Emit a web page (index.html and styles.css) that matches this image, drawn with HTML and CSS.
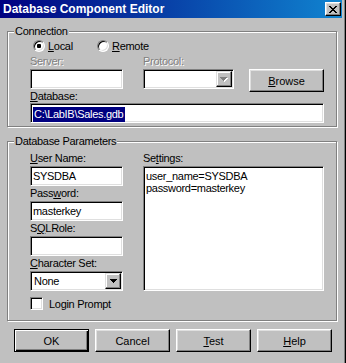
FILE: index.html
```html
<!DOCTYPE html>
<html lang="en">
<head>
    <meta charset="UTF-8">
    <title>Database Component Editor</title>
    <link rel="stylesheet" href="styles.css">
</head>
<body>
    <div class="window">
        <div class="titlebar">
            <span class="title">Database Component Editor</span>
            <button class="close">
                <svg width="8" height="7" viewBox="0 0 8 7" shape-rendering="crispEdges">
                    <path d="M0 0h2v1H0z M6 0h2v1H6z M1 1h2v1H1z M5 1h2v1H5z M2 2h4v1H2z M3 3h2v1H3z M2 4h4v1H2z M1 5h2v1H1z M5 5h2v1H5z M0 6h2v1H0z M6 6h2v1H6z" fill="#000"/>
                </svg>
            </button>
        </div>

        <div class="content">
            <fieldset class="group">
                <legend>Connection</legend>
                <div class="group-body conn">
                    <div class="radios">
                        <label class="radio"><span class="dot on"></span><span><u>L</u>ocal</span></label>
                        <label class="radio"><span class="dot"></span><span><u>R</u>emote</span></label>
                    </div>
                    <div class="server-row">
                        <div class="field server">
                            <div class="lbl disabled">Server:</div>
                            <div class="edit"></div>
                        </div>
                        <div class="field protocol">
                            <div class="lbl disabled">Protocol:</div>
                            <div class="combo">
                                <span class="combo-text"></span>
                                <span class="arrow">
                                    <svg width="8" height="5" viewBox="0 0 8 5" shape-rendering="crispEdges">
                                        <path d="M1 1h7v1H1z M2 2h5v1H2z M3 3h3v1H3z M4 4h1v1H4z" fill="#fff"/>
                                        <path d="M0 0h7v1H0z M1 1h5v1H1z M2 2h3v1H2z M3 3h1v1H3z" fill="#808080"/>
                                    </svg>
                                </span>
                            </div>
                        </div>
                        <button class="btn browse"><u>B</u>rowse</button>
                    </div>
                    <div class="field">
                        <div class="lbl short"><u>D</u>atabase:</div>
                        <div class="edit db"><span class="sel">C:\LabIB\Sales.gdb</span></div>
                    </div>
                </div>
            </fieldset>

            <fieldset class="group params">
                <legend>Database Parameters</legend>
                <div class="group-body">
                    <div class="param-grid">
                        <div class="left-col">
                            <div class="field">
                                <div class="lbl"><u>U</u>ser Name:</div>
                                <div class="edit">SYSDBA</div>
                            </div>
                            <div class="field">
                                <div class="lbl">Pass<u>w</u>ord:</div>
                                <div class="edit">masterkey</div>
                            </div>
                            <div class="field">
                                <div class="lbl">S<u>Q</u>LRole:</div>
                                <div class="edit"></div>
                            </div>
                            <div class="field">
                                <div class="lbl"><u>C</u>haracter Set:</div>
                                <div class="combo">
                                    <span class="combo-text">None</span>
                                    <span class="arrow">
                                        <svg width="7" height="4" viewBox="0 0 7 4" shape-rendering="crispEdges">
                                            <path d="M0 0h7v1H0z M1 1h5v1H1z M2 2h3v1H2z M3 3h1v1H3z" fill="#000"/>
                                        </svg>
                                    </span>
                                </div>
                            </div>
                        </div>
                        <div class="field">
                            <div class="lbl">Se<u>t</u>tings:</div>
                            <div class="memo">
                                <div>user_name=SYSDBA</div>
                                <div>password=masterkey</div>
                            </div>
                        </div>
                    </div>
                    <label class="check"><span class="box"></span><span>Login Prompt</span></label>
                </div>
            </fieldset>

            <div class="buttons">
                <button class="btn default">OK</button>
                <button class="btn">Cancel</button>
                <button class="btn"><u>T</u>est</button>
                <button class="btn"><u>H</u>elp</button>
            </div>
        </div>
    </div>
</body>
</html>
```

FILE: styles.css
```css
body {
    margin: 0;
    background-color: #c0c0c0;
    font-family: "Liberation Sans", Arial, sans-serif;
    font-size: 11px;
    letter-spacing: -0.3px;
    color: #000;
}
.window {
    width: 346px;
    height: 363px;
    box-sizing: border-box;
    padding-right: 3px;
    border-right: 1px solid #000;
    box-shadow: inset -1px 0 #808080;
}
.titlebar {
    height: 18px;
    display: flex;
    align-items: center;
    justify-content: space-between;
    padding: 0 1px 0 3px;
    background: linear-gradient(to right, #000080, #1084d0);
}
.title {
    color: white;
    font-weight: bold;
    font-size: 12px;
    letter-spacing: 0;
}
.close {
    width: 16px;
    height: 14px;
    padding: 0;
    display: flex;
    align-items: center;
    justify-content: center;
    background-color: #c0c0c0;
    border: 1px solid;
    border-color: #fff #000 #000 #fff;
    box-shadow: inset -1px -1px #808080, inset 1px 1px #dfdfdf;
}
.content {
    padding-left: 7px;
}

/* group boxes */
.group {
    width: 330px;
    box-sizing: border-box;
    margin: 7px 0 0;
    padding: 0 6px;
    min-width: 0;
    border: 1px solid #808080;
    box-shadow: inset 1px 1px #fff, 1px 1px #fff;
}
.group legend {
    padding: 0 1px;
    line-height: 13px;
    background-color: #c0c0c0;
}
.params {
    margin-top: 8px;
}
.group-body {
    padding: 3px 0 10px 16px;
}
.group-body.conn {
    padding: 0 0 3px 16px;
}

/* radios */
.radios {
    display: flex;
    align-items: center;
    height: 16px;
    padding-left: 3px;
}
.radio {
    display: flex;
    align-items: center;
    gap: 3px;
    width: 64px;
}
.dot {
    width: 12px;
    height: 12px;
    box-sizing: border-box;
    border-radius: 50%;
    background-color: #fff;
    border: 1px solid;
    border-color: #808080 #fff #fff #808080;
    box-shadow: inset 1px 1px #000, inset -1px -1px #dfdfdf;
}
.dot.on {
    background: radial-gradient(circle, #000 2px, #fff 2.5px);
}

/* fields */
.lbl {
    height: 15px;
    line-height: 15px;
    white-space: nowrap;
}
.lbl.short {
    height: 14px;
    line-height: 14px;
}
.lbl.disabled {
    color: #808080;
    text-shadow: 1px 1px #fff;
}
.edit, .combo, .memo, .box {
    box-sizing: border-box;
    background-color: #fff;
    border: 1px solid;
    border-color: #808080 #fff #fff #808080;
    box-shadow: inset 1px 1px #000, inset -1px -1px #dfdfdf;
}
.edit {
    height: 20px;
    line-height: 18px;
    padding: 0 2px;
    white-space: nowrap;
}
.edit.db {
    width: 294px;
}
.sel {
    display: inline-block;
    line-height: 15px;
    vertical-align: middle;
    padding: 0 2px 0 1px;
    background-color: #000080;
    color: white;
}
.combo {
    height: 20px;
    display: flex;
    align-items: center;
    justify-content: space-between;
    padding: 1px;
}
.combo-text {
    padding-left: 2px;
}
.arrow {
    width: 16px;
    height: 16px;
    box-sizing: border-box;
    display: flex;
    align-items: center;
    justify-content: center;
    background-color: #c0c0c0;
    border: 1px solid;
    border-color: #dfdfdf #000 #000 #dfdfdf;
    box-shadow: inset -1px -1px #808080, inset 1px 1px #fff;
}
.server-row {
    display: flex;
    align-items: flex-start;
}
.server {
    width: 93px;
    margin-right: 20px;
}
.protocol {
    width: 91px;
    margin-right: 15px;
}
.browse {
    margin-top: 15px;
    margin-bottom: -3px;
}

/* parameters */
.param-grid {
    display: grid;
    grid-template-columns: 93px 181px;
    column-gap: 20px;
}
.memo {
    height: 125px;
    padding: 3px 2px;
    line-height: 12px;
}
.check {
    display: flex;
    align-items: center;
    gap: 6px;
    height: 13px;
    margin-top: 6px;
}
.box {
    width: 13px;
    height: 13px;
}

/* buttons */
.btn {
    width: 75px;
    height: 23px;
    padding: 0;
    font: inherit;
    color: #000;
    background-color: #c0c0c0;
    border: 1px solid;
    border-color: #fff #000 #000 #fff;
    box-shadow: inset -1px -1px #808080, inset 1px 1px #dfdfdf;
}
.btn.default {
    border-color: #000;
    box-shadow: inset 1px 1px #fff, inset -1px -1px #000, inset -2px -2px #808080;
}
.buttons {
    display: flex;
    gap: 6px;
    margin: 8px 0 0 7px;
}
```
